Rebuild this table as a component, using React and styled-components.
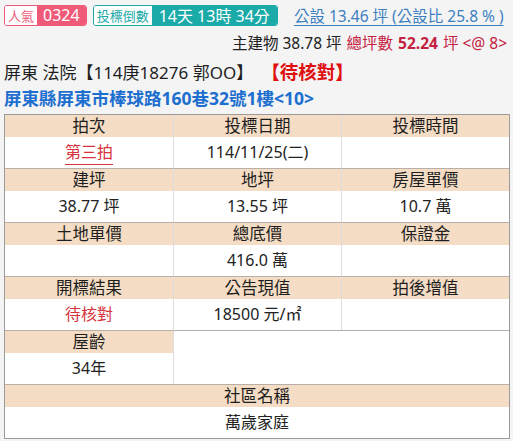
import styled, { createGlobalStyle } from 'styled-components';

const GlobalStyle = createGlobalStyle`
  html, body {
    margin: 0;
    padding: 0;
    background: #f4f4f4;
  }
  body {
    font-family: "Noto Sans", "Noto Sans CJK TC", sans-serif;
    color: #222;
  }
`;

const Page = styled.div`
  width: 513px;
  height: 441px;
  box-sizing: border-box;
  padding: 4px 3px 0 4px;
  overflow: hidden;
`;

const TopRow = styled.div`
  display: flex;
  align-items: center;
  height: 22px;
`;

const Badge = styled.div`
  display: flex;
  flex-shrink: 0;
  align-items: stretch;
  height: 21px;
  border: 1px solid ${(p) => p.$color};
  border-radius: 3px;
  box-sizing: border-box;
  overflow: hidden;
  white-space: nowrap;
  margin-right: ${(p) => p.$gap || 0}px;
`;

const BadgeLabel = styled.span`
  display: flex;
  align-items: center;
  padding: 0 3px;
  background: #fff;
  color: ${(p) => p.$color};
  font-size: 13px;
`;

const BadgeValue = styled.span`
  display: flex;
  align-items: center;
  padding: 0 ${(p) => p.$pad || 6}px;
  background: ${(p) => p.$color};
  color: #fff;
  font-size: 16px;
`;

const Ratio = styled.a`
  flex-shrink: 0;
  color: #3b7fc0;
  font-size: 15.5px;
  text-decoration: underline;
  text-underline-offset: 3px;
  white-space: nowrap;
`;

const AreaRow = styled.div`
  display: flex;
  justify-content: flex-end;
  align-items: baseline;
  gap: 5px;
  margin-top: 5px;
  padding-right: 3px;
  font-size: 15.5px;
  color: #222;
  white-space: nowrap;
`;

const Crimson = styled.span`
  color: #c4203f;
  font-weight: ${(p) => (p.$bold ? 700 : 400)};
`;

const TitleLine = styled.div`
  display: flex;
  align-items: baseline;
  margin-top: 7px;
  font-size: 17px;
  line-height: 22px;
  white-space: nowrap;
  color: #1e1e1e;
`;

const Status = styled.span`
  margin-left: 8px;
  font-size: 18.5px;
  color: #e01010;
  font-weight: 700;
`;

const Address = styled.div`
  margin-top: 3px;
  font-size: 17.5px;
  font-weight: 700;
  line-height: 22px;
  color: #1d6fcf;
  white-space: nowrap;
`;

const Table = styled.div`
  margin-top: 5px;
  display: grid;
  grid-template-columns: repeat(3, 1fr);
  width: 506px;
  box-sizing: border-box;
  border: 1px solid #9b9b9b;
  background: #fff;
`;

const Cell = styled.div`
  display: flex;
  flex-direction: column;
  grid-column: span ${(p) => p.$span || 1};
  border-top: ${(p) => (p.$first ? 'none' : '1px solid #b8b0a8')};
  border-left: ${(p) => (p.$col ? '1px solid #ddd' : 'none')};
`;

const Head = styled.div`
  height: 22px;
  line-height: 22px;
  background: #f4ddc4;
  text-align: center;
  font-size: 16.5px;
  color: #1e1e1e;
`;

const Value = styled.div`
  height: 31px;
  line-height: 31px;
  text-align: center;
  font-size: 16px;
  color: ${(p) => (p.$red ? '#d7333c' : '#222')};
`;

const LinkText = styled.span`
  border-bottom: 1px solid #d7333c;
  padding-bottom: 1px;
`;

const Filler = styled.div`
  grid-column: span 2;
  border-top: 1px solid #b8b0a8;
  border-left: 1px solid #ddd;
`;

const cells = [
  ['拍次', <LinkText>第三拍</LinkText>, true],
  ['投標日期', '114/11/25(二)'],
  ['投標時間', ''],
  ['建坪', '38.77 坪'],
  ['地坪', '13.55 坪'],
  ['房屋單價', '10.7 萬'],
  ['土地單價', ''],
  ['總底價', '416.0 萬'],
  ['保證金', ''],
  ['開標結果', '待核對', true],
  ['公告現值', '18500 元/㎡'],
  ['拍後增值', ''],
];

export default function App() {
  return (
    <Page>
      <GlobalStyle />
      <TopRow>
        <Badge $color="#ef5a79" $gap={6}>
          <BadgeLabel $color="#ef5a79">人氣</BadgeLabel>
          <BadgeValue $color="#ef5a79" $pad={6}>0324</BadgeValue>
        </Badge>
        <Badge $color="#1aaaa8" $gap={16}>
          <BadgeLabel $color="#1aaaa8">投標倒數</BadgeLabel>
          <BadgeValue $color="#1aaaa8" $pad={7}>14天 13時 34分</BadgeValue>
        </Badge>
        <Ratio>公設 13.46 坪 (公設比 25.8 % )</Ratio>
      </TopRow>
      <AreaRow>
        <span>主建物 38.78 坪</span>
        <Crimson>總坪數</Crimson>
        <Crimson $bold>52.24</Crimson>
        <Crimson>坪 &lt;@ 8&gt;</Crimson>
      </AreaRow>
      <TitleLine>
        屏東 法院【114庚18276 郭OO】
        <Status>【待核對】</Status>
      </TitleLine>
      <Address>屏東縣屏東市棒球路160巷32號1樓&lt;10&gt;</Address>
      <Table>
        {cells.map(([h, v, red], i) => (
          <Cell key={h} $first={i < 3} $col={i % 3 !== 0}>
            <Head>{h}</Head>
            <Value $red={red}>{v}</Value>
          </Cell>
        ))}
        <Cell>
          <Head>屋齡</Head>
          <Value>34年</Value>
        </Cell>
        <Filler />
        <Cell $span={3}>
          <Head>社區名稱</Head>
          <Value>萬歲家庭</Value>
        </Cell>
      </Table>
    </Page>
  );
}
